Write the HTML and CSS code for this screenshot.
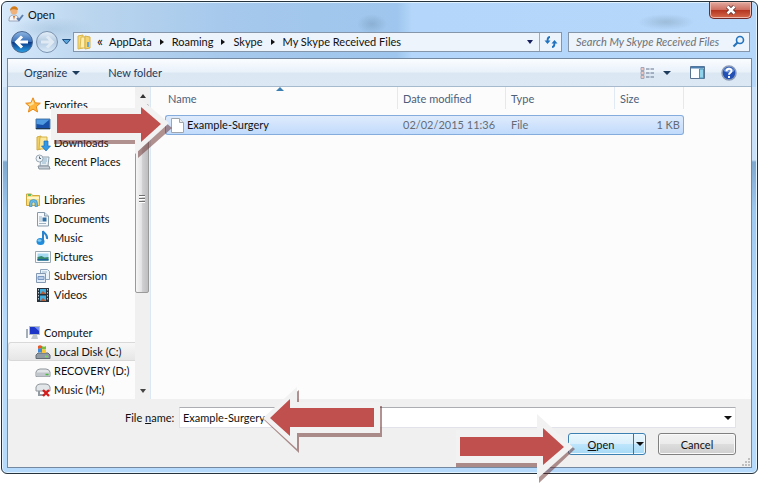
FILE: index.html
```html
<!DOCTYPE html>
<html lang="en">
<head>
<meta charset="utf-8">
<title>Open</title>
<link rel="stylesheet" href="styles.css">
</head>
<body>
<div class="window">
  <header class="titlebar">
    <svg class="icon" viewBox="0 0 16 16"><path d="M1 15c0-5 2-6 5-6s5 2 5 6z" fill="#f4f6fa" stroke="#9aa6b8"/><circle cx="6" cy="5" r="3.500" fill="#f0b27a"/><path d="M2 5c0-6 8-6 8-1-3 0-5-2-8 1z" fill="#d07a18"/><path d="M5 10l1 4 1-4z" fill="#d8691e"/><path d="M9 12l2 2 4-5" fill="none" stroke="#5d7fae" stroke-width="2"/></svg>
    <h1>Open</h1>
    <button class="close" aria-label="Close"><svg width="12" height="10" viewBox="0 0 12 10"><path d="M2.500 1.500l7 7M9.500 1.500l-7 7" stroke="#5a2a28" stroke-width="4"/><path d="M2.500 1.500l7 7M9.500 1.500l-7 7" stroke="#fff" stroke-width="2.500"/></svg></button>
  </header>
  <div class="navrow">
    <button class="round" aria-label="Back"><svg width="24" height="24" viewBox="0 0 24 24"><defs><linearGradient id="bk" x2="0" y2="1"><stop offset="0" stop-color="#8fb6e2"/><stop offset=".48" stop-color="#3a70b8"/><stop offset=".5" stop-color="#0b3584"/><stop offset="1" stop-color="#2aa4e8"/></linearGradient><linearGradient id="fw" x2="0" y2="1"><stop offset="0" stop-color="#e6eff9"/><stop offset=".5" stop-color="#b4cbe2"/><stop offset="1" stop-color="#dcecfa"/></linearGradient></defs><circle cx="12" cy="12" r="10.500" fill="url(#bk)" stroke="#4a678f"/><path d="M18 12H8M12 6.500L6.500 12l5.500 5.500" fill="none" stroke="#fff" stroke-width="3"/></svg></button>
    <button class="round" aria-label="Forward"><svg width="24" height="24" viewBox="0 0 24 24"><circle cx="12" cy="12" r="10.500" fill="url(#fw)" stroke="#7b93b0"/><path d="M6 12h10M12 6.500l5.500 5.500-5.500 5.500" fill="none" stroke="#e0eaf4" stroke-width="3"/></svg></button>
    <button class="recent" aria-label="Recent locations"><svg width="9" height="6" viewBox="0 0 9 6"><path d="M.5 .5h8L4.500 5z" fill="#5aa5dc" stroke="#1c4d80"/></svg></button>
    <nav class="address" aria-label="Address">
      <svg class="icon" viewBox="0 0 16 16"><path d="M2 2l5-1v13l-5 1z" fill="#f5dc7c" stroke="#d8b54c"/><path d="M5 3h4v11H4z" fill="#fcedb0" stroke="#dcbb58"/><path d="M9 2l5 1v11l-5 1z" fill="#f3d470" stroke="#d4b04a"/><path d="M12 8v5" stroke="#63a8d8" stroke-width="2"/></svg>
      <span class="chev">«</span>
      <a href="#">AppData</a><i class="tri"></i>
      <a href="#">Roaming</a><i class="tri"></i>
      <a href="#">Skype</a><i class="tri"></i>
      <a href="#">My Skype Received Files</a>
      <button class="drop" aria-label="Previous locations"><i class="down navy"></i></button>
      <button class="refresh" aria-label="Refresh"><svg width="14" height="14" viewBox="0 0 14 14"><path d="M6 2C3.500 2 3.500 4 3.500 7M8 12c2.500 0 2.500-2 2.500-5" fill="none" stroke="#2273bf" stroke-width="1.800"/><path d="M.5 5.500h6L3.500 9zM7.500 8.500h6L10.500 5z" fill="#2273bf"/></svg></button>
    </nav>
    <div class="search">
      <input type="text" placeholder="Search My Skype Received Files" aria-label="Search My Skype Received Files">
      <svg width="13" height="13" viewBox="0 0 13 13"><circle cx="8" cy="5" r="3.500" fill="#eaf4fd" stroke="#2573bc" stroke-width="1.600"/><path d="M5.500 7.500L1.500 11.500" stroke="#2573bc" stroke-width="2.200"/></svg>
    </div>
  </div>
  <main class="client">
    <div class="toolbar">
      <button>Organize<i class="down slate"></i></button>
      <button class="newfolder">New folder</button>
      <div class="tools">
        <button aria-label="Change view"><svg width="15" height="12" viewBox="0 0 15 12"><path d="M1 .5h3v3H1zM1 4.500h3v3H1zM1 8.500h3v3H1z" fill="#f0c9c4" stroke="#a5a5b5"/><path d="M6 2h3.500M10.500 2H14M6 6h3.500M10.500 6H14M6 10h3.500M10.500 10H14" stroke="#64748c"/></svg><i class="down slate"></i></button>
        <button aria-label="Show preview pane"><svg width="15" height="13" viewBox="0 0 15 13"><path d="M.5 .5h14v12H.5z" fill="#fbfdff" stroke="#56708e"/><path d="M1 1.500h13" stroke="#4c7eb0" stroke-width="2"/><path d="M9.500 3h4v9h-4z" fill="#8fd4ec" stroke="#4a93b8"/></svg></button>
        <button aria-label="Help"><svg width="16" height="16" viewBox="0 0 16 16"><circle cx="8" cy="8" r="7" fill="#2350b4" stroke="#8b9cb8" stroke-width="1.500"/><path d="M2.500 6a6 6 0 0 1 11 0q-5 3-11 0z" fill="#6f94dc"/><path d="M5.500 6.300C5.500 3 10.500 3 10.500 6 10.500 7.800 8 7.800 8 9.800M8 11v2" fill="none" stroke="#fff" stroke-width="1.900"/></svg></button>
      </div>
    </div>
    <div class="panes">
      <nav class="sidebar" aria-label="Folders">
        <ul class="tree">
          <li class="group"><svg class="icon" viewBox="0 0 16 16"><path d="M8 .8l2.100 5 5.200.4-4 3.500 1.300 5.300L8 12.200 3.400 15l1.300-5.300-4-3.500 5.200-.4z" fill="#fdb53c" stroke="#e78a1c"/><path d="M8 3l1 4-4 2-2-2 3-.5z" fill="#ffe39a"/></svg><a href="#">Favorites</a></li>
          <li><svg class="icon" viewBox="0 0 16 16"><path d="M1 3h14v10H1z" fill="#1650a8" stroke="#5980a8"/><path d="M1.500 3.500h13L8 9 1.500 8z" fill="#4f9ae0"/><path d="M1 12.500h14" stroke="#22384f"/></svg><a href="#">Desktop</a></li>
          <li><svg class="icon" viewBox="0 0 16 16"><path d="M2 2l4-1v13l-4 1z" fill="#f2d264" stroke="#d2ab3e"/><path d="M5 2h7v12H4z" fill="#fbe89d" stroke="#d5b14a"/><path d="M9 6h4v5h2.500L11 16 6.500 11H9z" fill="#3499e4" stroke="#1c6db8" stroke-width=".7"/></svg><a href="#">Downloads</a></li>
          <li><svg class="icon" viewBox="0 0 16 16"><path d="M6 3h8l-1 9H5z" fill="#e6eef4" stroke="#8fa1ae"/><path d="M7 5h5M7 7h5M7 9h4" stroke="#8fb4cc"/><path d="M3 12h11l1 3H4z" fill="#c6ced6" stroke="#87929d"/><circle cx="4.500" cy="4.500" r="3.500" fill="#eef3f7" stroke="#9aa9b5"/><path d="M4.500 2.500v2H6" fill="none" stroke="#48647a"/></svg><a href="#">Recent Places</a></li>
        </ul>
        <ul class="tree">
          <li class="group"><svg class="icon" viewBox="0 0 16 16"><path d="M1.500 13.500V2h5l1 1.500h7v10z" fill="#f8de80" stroke="#d1a83d"/><path d="M2 6h12" stroke="#fff4c4" stroke-width="2"/><path d="M3 3h3" stroke="#69b866" stroke-width="2"/><path d="M4.500 14.500v-3a4 4 0 0 1 8 0v3H10v-3a1.500 1.500 0 0 0-3 0v3z" fill="#67b9e6" stroke="#3b8dc0" stroke-width=".7"/></svg><a href="#">Libraries</a></li>
          <li><svg class="icon" viewBox="0 0 16 16"><path d="M2.500 1.500h7l4 3.500v10h-11z" fill="#f6fafc" stroke="#879aaa"/><path d="M9.500 1.500V5h4" fill="#d7e3ec" stroke="#879aaa"/><path d="M4 6h3M4 8h3M4 10h3M4 12.500h7" stroke="#9fb3c1"/><path d="M7.500 6.500h4v4h-4z" fill="#306fa6"/></svg><a href="#">Documents</a></li>
          <li><svg class="icon" viewBox="0 0 16 16"><ellipse cx="5.500" cy="11.500" rx="4" ry="3.500" fill="#1f8ddc"/><path d="M8 12V1c1 3 5 3 4 8" fill="none" stroke="#2b84cb" stroke-width="2"/><ellipse cx="4.500" cy="10.500" rx="2" ry="1.300" fill="#7ccaf5"/></svg><a href="#">Music</a></li>
          <li><svg class="icon" viewBox="0 0 16 16"><path d="M.5 2.500h15v11H.5z" fill="#fafcfd" stroke="#9aa8b3"/><path d="M2.500 4.500h11v7h-11z" fill="#a6daf3"/><path d="M2.500 8l4-1 3 1.500 4-.5v3.500h-11z" fill="#35886b"/><path d="M2.500 10h11v1.500h-11z" fill="#1d5f99"/></svg><a href="#">Pictures</a></li>
          <li><svg class="icon" viewBox="0 0 16 16"><path d="M5.500 1.500h7l2 2v8h-9z" fill="#eaf3fa" stroke="#8ea5bd"/><path d="M1.500 5.500h9v9h-9z" fill="#e2edf7" stroke="#8398b2"/><path d="M3 8.500h6v3H3z" fill="#b6cce7" stroke="#7898c3"/><path d="M7 4h5" stroke="#a3bad0"/></svg><a href="#">Subversion</a></li>
          <li><svg class="icon" viewBox="0 0 16 16"><path d="M2 1h12v14H2z" fill="#28323c"/><path d="M5 2h6v5H5zM5 8.500h6V14H5z" fill="#45aede"/><path d="M5 7l3-3 3 3zM5 14l3-3 3 3z" fill="#b25b38"/><path d="M3.500 2v12M12.500 2v12" stroke="#bcc8d2" stroke-dasharray="1.500 1.500"/></svg><a href="#">Videos</a></li>
        </ul>
        <ul class="tree">
          <li class="group"><svg class="icon" viewBox="0 0 16 16"><path d="M1 4h2v9H1z" fill="#a5afb8"/><path d="M4.500 1.500h10v8h-10z" fill="#1d36c8" stroke="#b2bdc8"/><path d="M9.500 2h4.500v4z" fill="#738cf2"/><path d="M8 10h4l1 4H6z" fill="#bfc6cc"/></svg><a href="#">Computer</a></li>
          <li class="current"><svg class="icon" viewBox="0 0 16 16"><path d="M1 11l2-2h10l2 2v3.500H1z" fill="#919ba3" stroke="#626b73"/><path d="M10 12.500h3" stroke="#70e04e" stroke-width="1.500"/><path d="M3 2q2-1.500 4 0v3Q5 4 3 5z" fill="#e8592a"/><path d="M7 2q2 1.500 4 0v3Q9 6 7 5z" fill="#7cbc3c"/><path d="M3 5q2-1.500 4 0v3.500Q5 7.500 3 8.500z" fill="#3e8bdb"/><path d="M7 5q2 1.500 4 0v3.500q-2 1-4 0z" fill="#f8c637"/></svg><a href="#">Local Disk (C:)</a></li>
          <li><svg class="icon" viewBox="0 0 16 16"><path d="M1 9q1-3 4-3h6q3 0 4 3v4.500H1z" fill="#e3e6e9" stroke="#8f969c"/><path d="M1.500 9.500h13v4h-13z" fill="#c0c6cb"/><path d="M10.500 11.500h3" stroke="#4dbb42" stroke-width="1.500"/></svg><a href="#">RECOVERY (D:)</a></li>
          <li><svg class="icon" viewBox="0 0 16 16"><path d="M1 5q1-3 4-3h6q3 0 4 3v4H1z" fill="#e3e6e9" stroke="#8f969c"/><path d="M4 9v4h5" fill="none" stroke="#949ca3" stroke-width="2"/><path d="M8 8l6 6M14 8l-6 6" stroke="#d51c1c" stroke-width="2.400"/></svg><a href="#">Music (M:)</a></li>
        </ul>
      </nav>
      <div class="scrollbar" aria-hidden="true">
        <span class="cap"><i class="up"></i></span>
        <span class="thumb"><i></i><i></i><i></i></span>
        <span class="cap bottom"><i class="down grey"></i></span>
      </div>
      <section class="files">
        <table>
          <thead><tr><th class="name">Name<i class="sort"></i></th><th class="date">Date modified</th><th class="type">Type</th><th class="size">Size</th></tr></thead>
          <tbody><tr><td><span class="file"><svg width="13" height="15" viewBox="0 0 13 15"><path d="M.5 .5h8l4 4v10H.5z" fill="#fff" stroke="#a0a6ac"/><path d="M8.500 .5v4h4" fill="#e9edf0" stroke="#a0a6ac"/></svg>Example-Surgery</span></td><td>02/02/2015 11:36</td><td>File</td><td class="num">1 KB</td></tr></tbody>
        </table>
      </section>
    </div>
    <form class="footer">
      <div class="namerow">
        <label for="fn">File <u>n</u>ame:</label>
        <div class="combo"><input id="fn" type="text" value="Example-Surgery"><button type="button" aria-label="Show file names"><i class="down"></i></button></div>
      </div>
      <div class="actions">
        <div class="split"><button type="button" class="go"><span><u>O</u>pen</span></button><button type="button" class="more" aria-label="Open options"><i class="down"></i></button></div>
        <button type="button" class="cancel">Cancel</button>
      </div>
      <svg class="grip" width="9" height="9" viewBox="0 0 9 9"><path d="M7 0h2v2H7zM7 3h2v2H7zM7 6h2v2H7zM4 3h2v2H4zM4 6h2v2H4zM1 6h2v2H1z" fill="#bfbfbf"/></svg>
    </form>
  </main>
</div>
<svg class="arrow first" width="124" height="66" viewBox="0 0 124 66"><path class="shade" d="M4 18h84V5l34 29-34 30V50H4z"/><path class="edge" d="M1 14h84V0l34 29-34 31V46H1z"/><path class="fill" d="M7 20h84v-7l20 17-20 18v-9H7z"/></svg>
<svg class="arrow second" width="122" height="70" viewBox="0 0 122 70"><path class="shade" d="M120 20H37V4L2 34l35 33V51h83z"/><path class="edge" d="M118 16H35V1L1 32l34 31V47h83z"/><path class="fill" d="M112 22H28v-9L8 32l20 18v-9h84z"/></svg>
<svg class="arrow third" width="124" height="72" viewBox="0 0 124 72"><path class="shade" d="M2 21h83V5l36 31-36 34V54H2z"/><path class="edge" d="M2 17h81V1l36 33-36 32V50H2z"/><path class="fill" d="M6 24h83v-9l21 19-21 18v-9H6z"/></svg>
</body>
</html>
```
FILE: styles.css
```css
* { box-sizing: border-box; }
body {
  position: relative;
  display: flex;
  min-height: 100vh;
  margin: 0;
  padding: 1px 2px 10px 1px;
  background: #fff;
  color: #111;
  font: 11px/19px Lato, "Open Sans", sans-serif;
}
button, input { margin: 0; padding: 0; border: 0; background: none; color: inherit; font: inherit; }
button { display: flex; align-items: center; justify-content: center; }
a { color: inherit; text-decoration: none; }
.icon { width: 16px; height: 16px; flex: none; }

.window {
  display: flex;
  flex: 1;
  flex-direction: column;
  padding: 0 5px 5px;
  border: 1px solid #26323c;
  border-radius: 6px;
  box-shadow: inset 0 0 0 1px #e0f2ff;
  background:
    radial-gradient(ellipse 42px 12px at 50px 27px, #8fb2cf66 0, #8fb2cf00 100%),
    radial-gradient(ellipse 28px 8px at 664px 20px, #8eabc699 0, #8eabc600 100%),
    radial-gradient(ellipse 15px 10px at 370px 22px, #799cbd88 0, #799cbd00 100%),
    linear-gradient(90deg, #d7e9fb 0, #bad5ee 90px, #a5c8ec 230px, #9fc6ee 395px, #b3d6fa 410px, #b5d7fa 100%) 0 0 / 100% 85px no-repeat,
    linear-gradient(#c8e0f8 158px, #7fa8ce 160px, #9dc8f0 210px, #b5dafc 320px);
}
.titlebar { display: flex; align-items: flex-start; height: 29px; }
.titlebar .icon { margin: 4px 4px 0 1px; }
.titlebar h1 { flex: 1; margin: 3px 0 0; font: inherit; }
.close {
  width: 43px;
  height: 17px;
  border: 1px solid #702a28;
  border-top: 0;
  border-radius: 0 0 5px 5px;
  background: linear-gradient(#e2aaa0, #cd6f61 48%, #b33420 50%, #d66a4b);
  box-shadow: inset 0 0 0 1px #efb9ad;
}

.navrow { display: flex; align-items: center; height: 21px; padding: 0 2px; }
.round { width: 25px; height: 24px; }
.recent { width: 14px; height: 20px; }
.address, .search { display: flex; align-items: center; height: 20px; border: 1px solid #8596aa; background: #edf4fc; }
.address { flex: 1; gap: 8px; padding-left: 2px; }
.address .chev { margin: -3px -2px 0 -3px; font-size: 14px; }
.tri { border: 3px solid transparent; border-left: 4px solid #111; border-right: 0; }
.drop { width: 14px; height: 18px; margin-left: auto; }
.refresh { width: 22px; height: 18px; margin-left: -6px; border-left: 1px solid #9badc0; }
.search { width: 182px; margin-left: 6px; padding: 0 4px 0 7px; }
.search input { flex: 1; min-width: 0; height: 18px; outline: 0; font-style: italic; }
.search input::placeholder { color: #6c7075; opacity: 1; }
.down { border: 4px solid transparent; border-top: 4px solid #111; border-bottom: 0; }
.navy { border-top-color: #17205c; border-left-width: 3px; border-right-width: 3px; }
.slate { border-top-color: #1e3d5c; }
.grey { border-top-color: #444; border-left-width: 3px; border-right-width: 3px; }
.up { border: 3px solid transparent; border-bottom: 4px solid #333; border-top: 0; }

.client { display: flex; flex: 1; flex-direction: column; margin-top: 6px; border: 1px solid #7488a0; background: #fcfcfc; }
.toolbar {
  display: flex;
  align-items: center;
  height: 28px;
  padding: 0 14px 0 16px;
  border-bottom: 1px solid #a7b9cc;
  background: linear-gradient(#fbfdff, #e9f1fa 48%, #dce7f4 52%, #dde8f5);
  color: #1e395b;
}
.toolbar button { gap: 5px; height: 20px; }
.toolbar .newfolder { margin-left: 28px; }
.tools { display: flex; gap: 19px; margin-left: auto; }
.tools button:first-child { gap: 8px; }
.tools button:last-child { margin-left: -3px; }

.panes { display: flex; flex: 1; }
.sidebar { width: 127px; padding-top: 8px; }
.tree { margin: 0 0 19px; padding: 0; list-style: none; }
.tree:last-child { margin: 0; height: 76px; }
.tree li { display: flex; align-items: center; gap: 3px; height: 19px; padding-left: 27px; white-space: nowrap; }
.tree .group { padding-left: 17px; }
.tree .current { border: 1px solid #d9d9d9; border-right: 0; border-radius: 3px 0 0 3px; padding-left: 26px; background: linear-gradient(#f7f7f7, #e6e6e6); }
.scrollbar { display: flex; flex-direction: column; width: 16px; border-right: 1px solid #dbe8f4; background: #f0f0f0; }
.cap { display: flex; align-items: center; justify-content: center; height: 17px; }
.cap.bottom { margin-top: auto; }
.thumb {
  display: flex;
  flex-direction: column;
  align-items: center;
  justify-content: center;
  gap: 1px;
  width: 14px;
  height: 189px;
  border: 1px solid #9a9a9a;
  border-radius: 2px;
  background: linear-gradient(90deg, #f6f6f6, #e4e4e6 45%, #cfcfd2 55%, #bebec1);
}
.thumb i { width: 6px; height: 2px; background: #707070; border-bottom: 1px solid #fff; }

.files { flex: 1; padding-left: 14px; }
table { width: 519px; border-collapse: separate; border-spacing: 0; table-layout: fixed; }
th { height: 22px; padding: 0 0 0 5px; border-right: 1px solid #e0eaf4; color: #4c607a; font-weight: 400; text-align: left; }
th.name { position: relative; width: 233px; padding-left: 3px; }
.sort { position: absolute; top: 0; left: 111px; border: 4px solid transparent; border-top: 0; border-bottom: 4px solid #3c7fb1; }
th.date { width: 108px; }
th.type { width: 109px; }
tbody::before { content: ""; display: block; height: 6px; }
td { height: 20px; padding: 0 5px; border: solid #84acdd; border-width: 1px 0; background: linear-gradient(#dfebfc, #c1dbfc); color: #666c74; line-height: 18px; }
td:first-child { border-left-width: 1px; border-radius: 3px 0 0 3px; color: #111; }
td:last-child { border-right-width: 1px; border-radius: 0 3px 3px 0; }
td.num { padding-right: 3px; text-align: right; }
.file { display: flex; align-items: center; gap: 3px; }

.footer { position: relative; height: 68px; padding: 8px 15px 0 117px; background: #f0f0f0; }
.namerow { display: flex; align-items: center; gap: 4px; }
label { width: 50px; white-space: nowrap; }
.combo { display: flex; flex: 1; height: 21px; border: 1px solid #e2e3ea; border-top-color: #abadb3; background: #fff; }
.combo input { flex: 1; min-width: 0; padding-left: 3px; outline: 0; }
.combo button { width: 15px; }
.actions { display: flex; justify-content: flex-end; gap: 12px; margin-top: 5px; }
.split { display: flex; width: 78px; height: 22px; border: 1px solid #3c7fb1; border-radius: 3px; background: linear-gradient(#eaf6fd, #d9f0fc 48%, #bee6fd 50%, #a7d9f5); box-shadow: inset 0 0 0 1px #eefaff; }
.go { flex: 1; }
.more { width: 12px; border-left: 1px solid #4f6e80; }
.cancel { width: 78px; height: 22px; border: 1px solid #808080; border-radius: 3px; background: linear-gradient(#f2f2f2, #ebebeb 48%, #dddddd 50%, #cfcfcf); box-shadow: inset 0 0 0 1px #fafafa; }
.grip { position: absolute; right: 1px; bottom: 0; }

.arrow { position: absolute; pointer-events: none; }
.first { top: 94px; left: 50px; }
.second { bottom: 28px; left: 262px; }
.third { right: 182px; bottom: -1px; }
.shade { fill: #632523; fill-opacity: .5; }
.edge { fill: #f2f2f2; }
.fill { fill: #c0504d; }
```
